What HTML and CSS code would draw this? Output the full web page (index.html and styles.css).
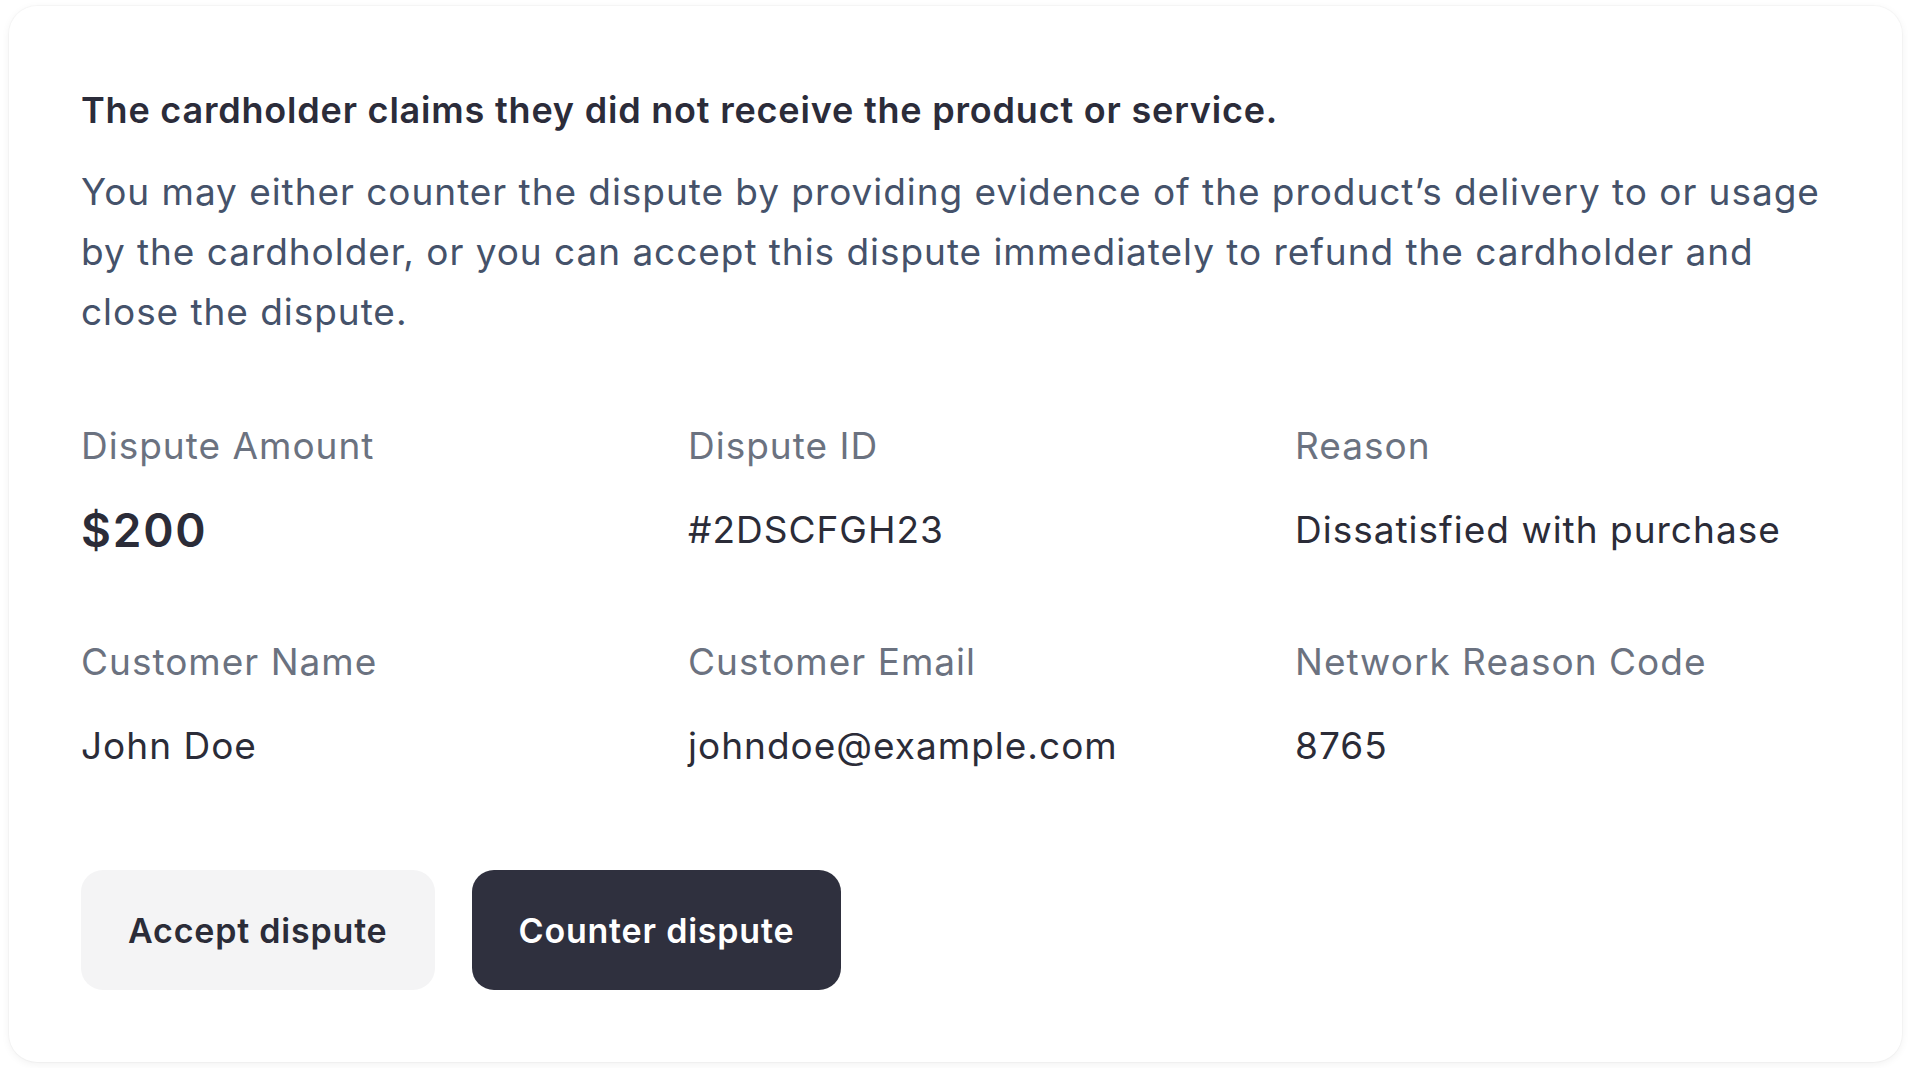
FILE: index.html
```html
<!DOCTYPE html>
<html lang="en">
<head>
<meta charset="utf-8">
<title>Dispute</title>
<link rel="stylesheet" href="styles.css">
</head>
<body>
  <div class="card">
    <h1 class="title">The cardholder claims they did not receive the product or service.</h1>
    <p class="desc">You may either counter the dispute by providing evidence of the product’s delivery to or usage by the cardholder, or you can accept this dispute immediately to refund the cardholder and close the dispute.</p>
    <div class="details">
      <div class="item">
        <div class="label">Dispute Amount</div>
        <div class="value amount">$200</div>
      </div>
      <div class="item">
        <div class="label">Dispute ID</div>
        <div class="value">#2DSCFGH23</div>
      </div>
      <div class="item">
        <div class="label">Reason</div>
        <div class="value">Dissatisfied with purchase</div>
      </div>
      <div class="item">
        <div class="label">Customer Name</div>
        <div class="value">John Doe</div>
      </div>
      <div class="item">
        <div class="label">Customer Email</div>
        <div class="value">johndoe@example.com</div>
      </div>
      <div class="item">
        <div class="label">Network Reason Code</div>
        <div class="value">8765</div>
      </div>
    </div>
    <div class="actions">
      <button class="btn btn-secondary">Accept dispute</button>
      <button class="btn btn-primary">Counter dispute</button>
    </div>
  </div>
</body>
</html>
```

FILE: styles.css
```css
* { box-sizing: border-box; }

html, body {
  margin: 0;
  padding: 0;
  background: #ffffff;
}

body {
  font-family: Inter, "Noto Sans", "Liberation Sans", sans-serif;
  padding: 6px 9px;
}

.card {
  width: 1893px;
  background: #ffffff;
  border-radius: 28px;
  padding: 82px 72px 72px 72px;
  box-shadow: 0 2px 8px rgba(0, 0, 0, 0.06), 0 0 0 1px rgba(0, 0, 0, 0.025);
}

.title {
  margin: 0;
  font-size: 36px;
  line-height: 44px;
  font-weight: 600;
  color: #2b2c3a;
  letter-spacing: 0.8px;
}

.desc {
  margin: 30px 0 0 0;
  font-size: 37px;
  line-height: 60px;
  font-weight: 400;
  color: #45526a;
  letter-spacing: 0.95px;
}

.details {
  margin-top: 82px;
  display: grid;
  grid-template-columns: repeat(3, 1fr);
  column-gap: 72px;
  row-gap: 84px;
}

.item {
  display: flex;
  flex-direction: column;
  gap: 36px;
}

.label {
  font-size: 37px;
  line-height: 44px;
  color: #6b7280;
  letter-spacing: 1px;
}

.value {
  font-size: 37px;
  line-height: 52px;
  color: #2b2c38;
  letter-spacing: 1px;
}

.value.amount {
  font-size: 46px;
  font-weight: 600;
  letter-spacing: 1.8px;
}

.actions {
  margin-top: 98px;
  display: flex;
  gap: 37px;
}

.btn {
  height: 120px;
  border: none;
  border-radius: 22px;
  padding: 0 47px;
  font-family: Inter, "Noto Sans", "Liberation Sans", sans-serif;
  font-size: 34px;
  font-weight: 600;
  letter-spacing: 0.8px;
  cursor: pointer;
}

.btn-secondary {
  background: #f4f4f5;
  color: #2b2c38;
}

.btn-primary {
  background: #2f303e;
  color: #ffffff;
}
```
